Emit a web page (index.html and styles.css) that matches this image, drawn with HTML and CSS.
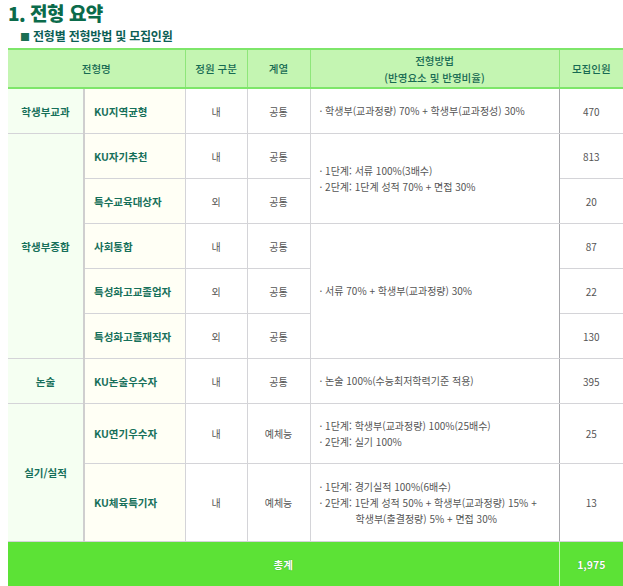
FILE: index.html
```html
<!DOCTYPE html>
<html lang="ko">
<head>
<meta charset="utf-8">
<link rel="stylesheet" href="styles.css">
</head>
<body>
<div class="page">
  <h1 class="title">1. 전형 요약</h1>
  <h2 class="subtitle"><span class="sq">■</span> 전형별 전형방법 및 모집인원</h2>
  <table class="summary">
    <colgroup>
      <col class="c1"><col class="c2"><col class="c3"><col class="c4"><col class="c5"><col class="c6">
    </colgroup>
    <thead>
      <tr class="head">
        <th colspan="2">전형명</th>
        <th>정원 구분</th>
        <th>계열</th>
        <th>전형방법<br>(반영요소 및 반영비율)</th>
        <th class="last">모집인원</th>
      </tr>
    </thead>
    <tbody>
      <tr class="r45">
        <td class="cat">학생부교과</td>
        <td class="name">KU지역균형</td>
        <td class="ctr">내</td>
        <td class="ctr">공통</td>
        <td class="method">· 학생부(교과정량) 70% + 학생부(교과정성) 30%</td>
        <td class="ctr num">470</td>
      </tr>
      <tr class="r45">
        <td class="cat" rowspan="5">학생부종합</td>
        <td class="name">KU자기추천</td>
        <td class="ctr">내</td>
        <td class="ctr">공통</td>
        <td class="method" rowspan="2"><div>· 1단계: 서류 100%(3배수)</div><div>· 2단계: 1단계 성적 70% + 면접 30%</div></td>
        <td class="ctr num">813</td>
      </tr>
      <tr class="r45">
        <td class="name">특수교육대상자</td>
        <td class="ctr">외</td>
        <td class="ctr">공통</td>
        <td class="ctr num">20</td>
      </tr>
      <tr class="r45">
        <td class="name">사회통합</td>
        <td class="ctr">내</td>
        <td class="ctr">공통</td>
        <td class="method" rowspan="3">· 서류 70% + 학생부(교과정량) 30%</td>
        <td class="ctr num">87</td>
      </tr>
      <tr class="r45">
        <td class="name">특성화고교졸업자</td>
        <td class="ctr">외</td>
        <td class="ctr">공통</td>
        <td class="ctr num">22</td>
      </tr>
      <tr class="r45">
        <td class="name">특성화고졸재직자</td>
        <td class="ctr">외</td>
        <td class="ctr">공통</td>
        <td class="ctr num">130</td>
      </tr>
      <tr class="r45">
        <td class="cat">논술</td>
        <td class="name">KU논술우수자</td>
        <td class="ctr">내</td>
        <td class="ctr">공통</td>
        <td class="method">· 논술 100%(수능최저학력기준 적용)</td>
        <td class="ctr num">395</td>
      </tr>
      <tr class="r60">
        <td class="cat" rowspan="2">실기/실적</td>
        <td class="name">KU연기우수자</td>
        <td class="ctr">내</td>
        <td class="ctr">예체능</td>
        <td class="method"><div>· 1단계: 학생부(교과정량) 100%(25배수)</div><div>· 2단계: 실기 100%</div></td>
        <td class="ctr num">25</td>
      </tr>
      <tr class="r78">
        <td class="name">KU체육특기자</td>
        <td class="ctr">내</td>
        <td class="ctr">예체능</td>
        <td class="method"><div>· 1단계: 경기실적 100%(6배수)</div><div>· 2단계: 1단계 성적 50% + 학생부(교과정량) 15% +</div><div class="indent">학생부(출결정량) 5% + 면접 30%</div></td>
        <td class="ctr num">13</td>
      </tr>
      <tr class="total">
        <td colspan="5">총계</td>
        <td class="last">1,975</td>
      </tr>
    </tbody>
  </table>
</div>
</body>
</html>
```
FILE: styles.css
```css
html, body {
  margin: 0;
  padding: 0;
  background: #ffffff;
  overflow: hidden;
}
body {
  font-family: "Noto Sans CJK KR", "Noto Sans", sans-serif;
  color: #555555;
}
.page {
  padding: 0 0 0 8px;
  width: 623px;
}
.title {
  margin: 0;
  padding-top: 2px;
  height: 26px;
  font-size: 19px;
  line-height: 22px;
  font-weight: 900;
  color: #0b6b4b;
  letter-spacing: -0.5px;
}
.subtitle {
  margin: 0 0 0 12px;
  height: 20px;
  font-size: 12px;
  line-height: 16px;
  font-weight: 700;
  color: #0b5e55;
  letter-spacing: -0.2px;
}
.subtitle .sq {
  font-size: 10px;
  color: #1a6e52;
}
.summary {
  border-collapse: collapse;
  table-layout: fixed;
  width: 615px;
  font-size: 10px;
}
.c1 { width: 76px; }
.c2 { width: 101px; }
.c3 { width: 62px; }
.c4 { width: 63px; }
.c5 { width: 249px; }
.c6 { width: 64px; }
.summary td, .summary th {
  border: 1px solid #d4d4d8;
  padding: 0;
  vertical-align: middle;
}
.head th {
  height: 37px;
  background: #c4f5b2;
  border-top: 2px solid #7ee66a;
  border-bottom: 2px solid #7ee66a;
  border-left: 1px solid #8ee67a;
  border-right: 1px solid #8ee67a;
  color: #176a52;
  font-weight: 500;
  font-size: 10.5px;
  line-height: 17px;
  text-align: center;
}
.head th:first-child { border-left: none; }
.head th.last { border-right: none; }
.r45 td { height: 44px; }
.r60 td { height: 59px; }
.r78 td { height: 77px; }
.summary td:first-child { border-left: none; }
.cat {
  background: #f5fff2;
  text-align: center;
  color: #16705a;
  font-weight: 700;
  font-size: 10.5px;
  border-right: 2px solid #cfcfcf !important;
}
.name {
  background: #fffff5;
  color: #16705a;
  font-weight: 700;
  font-size: 10.5px;
  padding-left: 9px !important;
}
.ctr {
  text-align: center;
  color: #555;
}
.method {
  padding-left: 9px !important;
  color: #555;
  line-height: 16px;
  border-right: 1px solid #a8a8ac !important;
}
.method .indent {
  padding-left: 36px;
}
.num { border-right: none !important; }
.total td {
  height: 45px;
  background: #5ce236;
  color: #ffffff;
  font-weight: 700;
  font-size: 10.5px;
  text-align: center;
  border: none;
  border-top: 1px solid #c0c0c0;
  text-shadow: 0 0 1px #2a8a1a;
}
.total td.last {
  border-left: 1px solid #c8f5b8;
}
```
